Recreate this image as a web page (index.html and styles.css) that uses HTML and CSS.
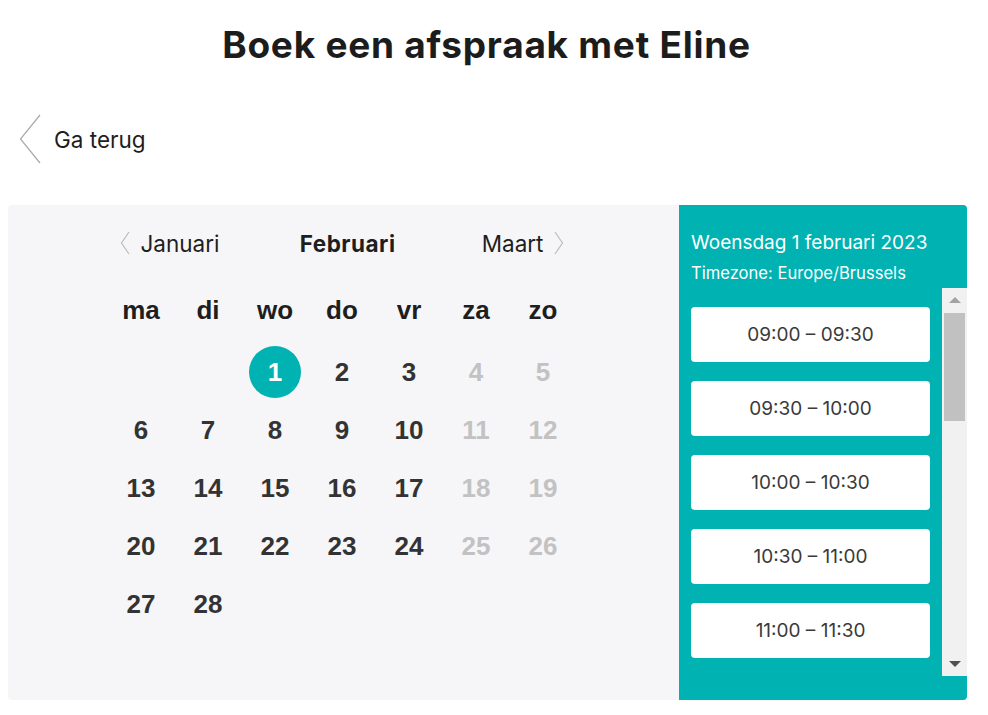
FILE: index.html
```html
<!DOCTYPE html>
<html lang="nl">
<head>
<meta charset="utf-8">
<title>Boek een afspraak met Eline</title>
<link rel="stylesheet" href="styles.css">
</head>
<body>
<h1 class="title">Boek een afspraak met Eline</h1>
<a class="back" href="#">
  <svg class="back-icon" width="22" height="50" viewBox="0 0 22 50"><path d="M21 1 L1.5 25 L21 49" fill="none" stroke="#aaaaaa" stroke-width="1.2"/></svg>
  <span>Ga terug</span>
</a>
<div class="booking">
  <section class="calendar">
    <div class="month-nav">
      <a class="nav-link" href="#"><svg width="10" height="24" viewBox="0 0 10 24"><path d="M9 1 L1.5 12 L9 23" fill="none" stroke="#bbbbbb" stroke-width="1.2"/></svg><span>Januari</span></a>
      <span class="current">Februari</span>
      <a class="nav-link" href="#"><span>Maart</span><svg width="10" height="24" viewBox="0 0 10 24"><path d="M1 1 L8.5 12 L1 23" fill="none" stroke="#bbbbbb" stroke-width="1.2"/></svg></a>
    </div>
    <div class="grid">
      <div class="wd">ma</div><div class="wd">di</div><div class="wd">wo</div><div class="wd">do</div><div class="wd">vr</div><div class="wd">za</div><div class="wd">zo</div>
      <div class="day"></div><div class="day"></div><div class="day"><span class="sel">1</span></div><div class="day">2</div><div class="day">3</div><div class="day off">4</div><div class="day off">5</div>
      <div class="day">6</div><div class="day">7</div><div class="day">8</div><div class="day">9</div><div class="day">10</div><div class="day off">11</div><div class="day off">12</div>
      <div class="day">13</div><div class="day">14</div><div class="day">15</div><div class="day">16</div><div class="day">17</div><div class="day off">18</div><div class="day off">19</div>
      <div class="day">20</div><div class="day">21</div><div class="day">22</div><div class="day">23</div><div class="day">24</div><div class="day off">25</div><div class="day off">26</div>
      <div class="day">27</div><div class="day">28</div>
    </div>
  </section>
  <aside class="slots-panel">
    <div class="date-line">Woensdag 1 februari 2023</div>
    <div class="tz-line">Timezone: Europe/Brussels</div>
    <div class="scroll">
      <div class="slot-list">
        <button class="slot">09:00 – 09:30</button>
        <button class="slot">09:30 – 10:00</button>
        <button class="slot">10:00 – 10:30</button>
        <button class="slot">10:30 – 11:00</button>
        <button class="slot">11:00 – 11:30</button>
      </div>
      <div class="scrollbar">
        <div class="sb-btn"><span class="arrow-up"></span></div>
        <div class="sb-track"><div class="sb-thumb"></div></div>
        <div class="sb-btn"><span class="arrow-down"></span></div>
      </div>
    </div>
  </aside>
</div>
</body>
</html>
```
FILE: styles.css
```css
* { box-sizing: border-box; }
html, body { margin: 0; padding: 0; background: #ffffff; }
body {
  font-family: Inter, "Noto Sans", sans-serif;
  color: #1e1e1e;
  width: 988px;
  height: 715px;
  overflow: hidden;
}
.title {
  margin: 0;
  padding: 25px 15px 0 0;
  height: 65px;
  font-size: 37px;
  line-height: 40px;
  font-weight: 700;
  letter-spacing: 0.75px;
  text-align: center;
  color: #1c1c1c;
}
.back {
  display: flex;
  align-items: center;
  gap: 13px;
  margin: 49px 0 0 19px;
  height: 50px;
  width: 140px;
  text-decoration: none;
  color: #1e1e1e;
  font-size: 22.5px;
}
.back-icon { display: block; }
.booking {
  display: flex;
  margin: 41px 21px 0 8px;
  height: 495px;
}
.calendar {
  flex: 1;
  background: #f6f6f8;
  border-radius: 4px 0 0 4px;
  padding: 23px 3px 0 0;
}
.month-nav {
  width: 445px;
  height: 30px;
  margin: 0 auto;
  display: flex;
  justify-content: space-between;
  align-items: center;
  font-size: 22.5px;
}
.nav-link {
  display: flex;
  align-items: center;
  gap: 11px;
  color: #1e1e1e;
  text-decoration: none;
}
.nav-link svg { display: block; }
.current { font-weight: 700; letter-spacing: 0.5px; margin-right: 6px; }
.grid {
  width: 469px;
  margin: 23px auto 0;
  display: grid;
  grid-template-columns: repeat(7, 67px);
  grid-template-rows: 62px repeat(5, 58px);
  font-family: "Liberation Sans", Arial, sans-serif;
  font-weight: 700;
  font-size: 26px;
}
.wd {
  align-self: start;
  height: 58px;
  display: flex;
  align-items: center;
  justify-content: center;
  color: #1e1e1e;
}
.day {
  display: flex;
  align-items: center;
  justify-content: center;
  color: #333333;
}
.day.off { color: #c2c2c2; }
.sel {
  width: 52px;
  height: 52px;
  border-radius: 50%;
  background: #00b2b2;
  color: #ffffff;
  display: flex;
  align-items: center;
  justify-content: center;
}
.slots-panel {
  width: 288px;
  background: #00b2b2;
  border-radius: 0 4px 4px 0;
  padding-top: 27px;
  color: #ffffff;
  display: flex;
  flex-direction: column;
}
.date-line {
  padding-left: 12px;
  font-size: 19px;
  line-height: 22px;
}
.tz-line {
  padding-left: 12px;
  margin-top: 9px;
  font-size: 16.6px;
  line-height: 20px;
}
.scroll {
  margin-top: 5px;
  height: 388px;
  display: flex;
}
.slot-list {
  flex: 1;
  overflow: hidden;
  padding: 19px 12px 0;
  display: flex;
  flex-direction: column;
  gap: 19px;
}
.slot {
  flex: none;
  height: 55px;
  border: 0;
  border-radius: 4px;
  background: #ffffff;
  font-family: Inter, "Noto Sans", sans-serif;
  font-size: 19px;
  color: #3a3a3a;
  padding: 0;
  text-align: center;
}
.scrollbar {
  width: 25px;
  background: #f1f1f1;
  display: flex;
  flex-direction: column;
}
.sb-btn {
  height: 24px;
  display: flex;
  align-items: center;
  justify-content: center;
}
.arrow-up, .arrow-down {
  width: 0;
  height: 0;
  border-left: 6px solid transparent;
  border-right: 6px solid transparent;
}
.arrow-up { border-bottom: 6px solid #a3a3a3; }
.arrow-down { border-top: 6px solid #505050; }
.sb-track {
  flex: 1;
  padding: 1px 2px 0;
}
.sb-thumb {
  height: 108px;
  background: #c1c1c1;
}
```
